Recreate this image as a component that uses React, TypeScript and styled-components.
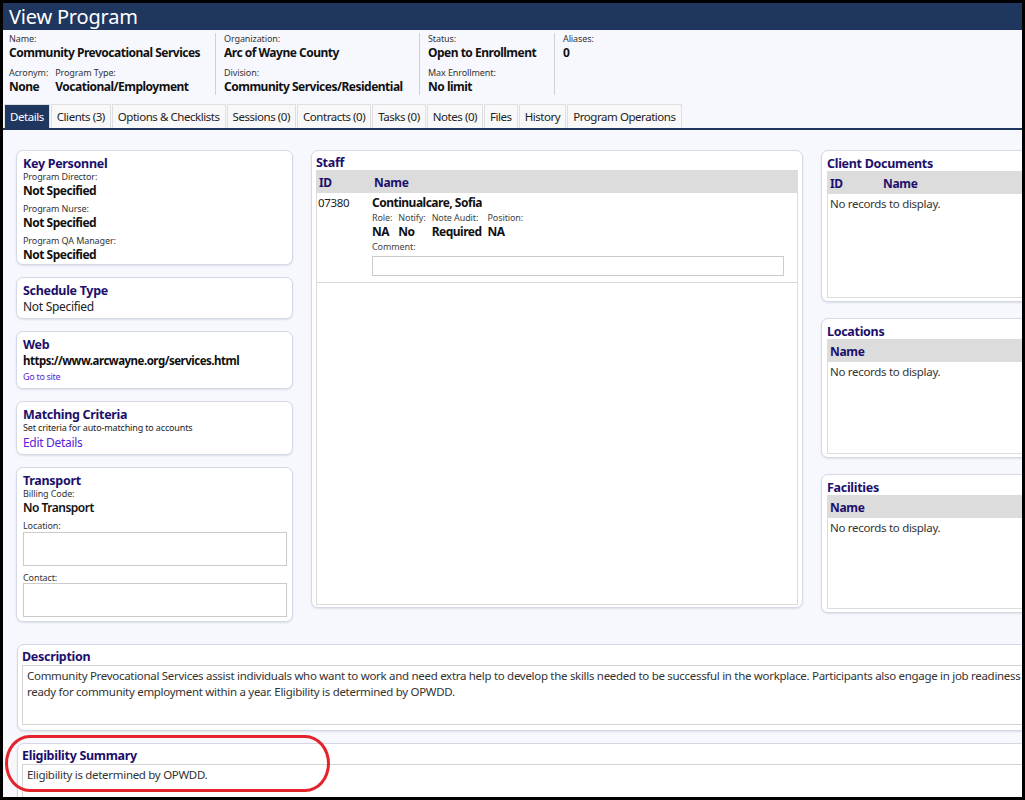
import React from 'react'
import styled, { createGlobalStyle } from 'styled-components'

const navy = '#1f365f'
const ink = '#1c0f6b'

const GlobalStyle = createGlobalStyle`
    html, body {
        margin: 0;
        padding: 0;
        background: #000;
    }
    body {
        font-family: "Noto Sans", "Open Sans", sans-serif;
        color: #111;
        letter-spacing: -0.3px;
    }
`

const Frame = styled.div`
    position: relative;
    width: 1025px;
    height: 800px;
    box-sizing: border-box;
    border: 3px solid #000;
    overflow: hidden;
    background: #f7f8fd;
`

const Page = styled.div`
    width: 1170px;
`

const TitleBar = styled.div`
    height: 27px;
    background: ${navy};
    color: #fff;
    font-size: 20px;
    line-height: 27px;
    padding-left: 6px;
    letter-spacing: -0.2px;
`

const InfoBar = styled.div`
    display: flex;
    height: 62px;
    margin-top: 3px;
`

const InfoCol = styled.div<{ $w?: number; $first?: boolean; $last?: boolean }>`
    box-sizing: border-box;
    width: ${p => (p.$w ? `${p.$w}px` : 'auto')};
    padding: 0 8px 0 ${p => (p.$first ? 6 : 8)}px;
    border-right: ${p => (p.$last ? 'none' : '1px solid #cfd1d8')};
    display: flex;
    flex-direction: column;
`

const InfoPair = styled.div`
    display: flex;
    gap: 7px;
    margin-top: 6px;
`

const Label = styled.div`
    font-size: 9px;
    line-height: 11px;
    color: #333;
    letter-spacing: -0.1px;
    white-space: nowrap;
`

const Value = styled.div<{ $size?: number; $weight?: number }>`
    font-size: ${p => p.$size ?? 12}px;
    font-weight: ${p => p.$weight ?? 700};
    line-height: 17px;
    color: #111;
    letter-spacing: -0.5px;
    white-space: nowrap;
`

const TabRow = styled.div`
    display: flex;
    margin-top: 9px;
    padding-left: 1px;
    border-bottom: 2px solid ${navy};
`

const Tab = styled.div<{ $active?: boolean }>`
    box-sizing: border-box;
    height: 24px;
    line-height: 23px;
    padding: 0 5px;
    border: 1px solid #dedfe3;
    border-bottom: none;
    margin-right: 1px;
    background: ${p => (p.$active ? navy : '#f8f8f8')};
    color: ${p => (p.$active ? '#fff' : '#222')};
    font-size: 11.5px;
    letter-spacing: -0.45px;
    white-space: nowrap;
`

const Main = styled.div`
    display: grid;
    grid-template-columns: 277px 492px 262px;
    column-gap: 18px;
    align-items: start;
    padding: 20px 0 0 13px;
`

const Column = styled.div<{ $gap: number }>`
    display: flex;
    flex-direction: column;
    gap: ${p => p.$gap}px;
`

const Card = styled.section<{ $h?: number; $pad?: string }>`
    box-sizing: border-box;
    background: #fff;
    border: 1px solid #d5d9e6;
    border-radius: 7px;
    box-shadow: 0 1px 2px rgba(40, 50, 90, 0.12);
    padding: ${p => p.$pad ?? '5px 5px 4px 6px'};
    display: flex;
    flex-direction: column;
    ${p => (p.$h ? `height: ${p.$h}px;` : '')}
`

const CardTitle = styled.div`
    font-size: 12.5px;
    font-weight: 700;
    line-height: 15px;
    color: ${ink};
    white-space: nowrap;
`

const Field = styled.div<{ $mt?: number }>`
    margin-top: ${p => p.$mt ?? 0}px;
`

const Plain = styled.div<{ $size?: number }>`
    font-size: ${p => p.$size ?? 12}px;
    line-height: 18px;
    color: #222;
    white-space: nowrap;
`

const Small = styled.div`
    font-size: 9px;
    line-height: 12px;
    color: #222;
    letter-spacing: -0.15px;
    white-space: nowrap;
`

const LinkText = styled.div<{ $size: number; $lh: number }>`
    font-size: ${p => p.$size}px;
    line-height: ${p => p.$lh}px;
    color: #5b22d6;
    white-space: nowrap;
`

const InputBox = styled.div<{ $h: number; $mt?: number }>`
    box-sizing: border-box;
    height: ${p => p.$h}px;
    margin-top: ${p => p.$mt ?? 0}px;
    border: 1px solid #cbcbcb;
    background: #fff;
`

const Table = styled.div<{ $fill?: boolean }>`
    display: flex;
    flex-direction: column;
    border: 1px solid #dcdcdc;
    ${p => (p.$fill ? 'flex: 1;' : '')}
`

const HeadRow = styled.div`
    display: flex;
    height: 22px;
    align-items: center;
    background: #dcdcdc;
`

const HeadCell = styled.div<{ $w?: number }>`
    ${p => (p.$w ? `width: ${p.$w}px;` : 'flex: 1;')}
    box-sizing: border-box;
    padding-left: 2px;
    font-size: 12px;
    font-weight: 700;
    color: ${ink};
`

const Empty = styled.div`
    padding: 1px 2px;
    font-size: 11.5px;
    line-height: 18px;
    color: #333;
`

const StaffRow = styled.div`
    display: flex;
    padding: 1px 13px 6px 0;
    border-bottom: 1px solid #d6d6d6;
`

const IdCell = styled.div`
    box-sizing: border-box;
    width: 55px;
    padding-left: 1px;
    font-size: 11.5px;
    line-height: 18px;
    color: #222;
`

const StaffBody = styled.div`
    flex: 1;
    display: flex;
    flex-direction: column;
`

const SubFields = styled.div`
    display: flex;
    gap: 6px;
    margin-top: 1px;
`

const SubField = styled.div`
    display: flex;
    flex-direction: column;
`

const SubLabel = styled.div`
    font-size: 9px;
    line-height: 11px;
    color: #444;
    letter-spacing: -0.1px;
    white-space: nowrap;
`

const Bottom = styled.div`
    display: flex;
    flex-direction: column;
    gap: 12px;
    padding: 22px 0 0 14px;
`

const TextArea = styled.div<{ $h: number }>`
    box-sizing: border-box;
    height: ${p => p.$h}px;
    margin-top: 1px;
    padding: 2px 4px;
    border: 1px solid #d3d3d3;
    border-right: none;
    font-size: 11.5px;
    line-height: 16px;
    color: #333;
    white-space: nowrap;
`

const Annotation = styled.div`
    position: absolute;
    left: 2px;
    top: 732px;
    width: 325px;
    height: 57px;
    box-sizing: border-box;
    border: 3px solid #e3232b;
    border-radius: 26px / 30px;
    pointer-events: none;
`

const tabs = [
    'Details',
    'Clients (3)',
    'Options & Checklists',
    'Sessions (0)',
    'Contracts (0)',
    'Tasks (0)',
    'Notes (0)',
    'Files',
    'History',
    'Program Operations',
]

const staffFields = [
    { label: 'Role:', value: 'NA' },
    { label: 'Notify:', value: 'No' },
    { label: 'Note Audit:', value: 'Required' },
    { label: 'Position:', value: 'NA' },
]

function RecordList({ title, cols, h }: { title: string; cols: { name: string; w?: number }[]; h: number }) {
    return (
        <Card $h={h} $pad="5px 0 3px 5px">
            <CardTitle>{title}</CardTitle>
            <Table $fill>
                <HeadRow>
                    {cols.map(c => (
                        <HeadCell key={c.name} $w={c.w}>{c.name}</HeadCell>
                    ))}
                </HeadRow>
                <Empty>No records to display.</Empty>
            </Table>
        </Card>
    )
}

export default function App() {
    return (
        <>
            <GlobalStyle />
            <Frame>
                <Page>
                    <TitleBar>View Program</TitleBar>
                    <InfoBar>
                        <InfoCol $w={213} $first>
                            <Label>Name:</Label>
                            <Value>Community Prevocational Services</Value>
                            <InfoPair>
                                <div>
                                    <Label>Acronym:</Label>
                                    <Value>None</Value>
                                </div>
                                <div>
                                    <Label>Program Type:</Label>
                                    <Value>Vocational/Employment</Value>
                                </div>
                            </InfoPair>
                        </InfoCol>
                        <InfoCol $w={204}>
                            <Label>Organization:</Label>
                            <Value>Arc of Wayne County</Value>
                            <Field $mt={6}>
                                <Label>Division:</Label>
                                <Value>Community Services/Residential</Value>
                            </Field>
                        </InfoCol>
                        <InfoCol $w={135}>
                            <Label>Status:</Label>
                            <Value>Open to Enrollment</Value>
                            <Field $mt={6}>
                                <Label>Max Enrollment:</Label>
                                <Value>No limit</Value>
                            </Field>
                        </InfoCol>
                        <InfoCol $last>
                            <Label>Aliases:</Label>
                            <Value>0</Value>
                        </InfoCol>
                    </InfoBar>

                    <TabRow>
                        {tabs.map((t, i) => (
                            <Tab key={t} $active={i === 0}>{t}</Tab>
                        ))}
                    </TabRow>

                    <Main>
                        <Column $gap={12}>
                            <Card $h={115}>
                                <CardTitle>Key Personnel</CardTitle>
                                <Label>Program Director:</Label>
                                <Value>Not Specified</Value>
                                <Field $mt={4}>
                                    <Label>Program Nurse:</Label>
                                    <Value>Not Specified</Value>
                                </Field>
                                <Field $mt={4}>
                                    <Label>Program QA Manager:</Label>
                                    <Value>Not Specified</Value>
                                </Field>
                            </Card>
                            <Card $h={42}>
                                <CardTitle>Schedule Type</CardTitle>
                                <Plain>Not Specified</Plain>
                            </Card>
                            <Card $h={58}>
                                <CardTitle>Web</CardTitle>
                                <Value $size={11.5}>https://www.arcwayne.org/services.html</Value>
                                <LinkText $size={9} $lh={16}>Go to site</LinkText>
                            </Card>
                            <Card $h={54}>
                                <CardTitle>Matching Criteria</CardTitle>
                                <Small>Set criteria for auto-matching to accounts</Small>
                                <LinkText $size={12} $lh={18}>Edit Details</LinkText>
                            </Card>
                            <Card $h={155}>
                                <CardTitle>Transport</CardTitle>
                                <Label>Billing Code:</Label>
                                <Value $weight={600}>No Transport</Value>
                                <Field $mt={4}>
                                    <Label>Location:</Label>
                                    <InputBox $h={34} $mt={1} />
                                </Field>
                                <Field $mt={6}>
                                    <Label>Contact:</Label>
                                    <InputBox $h={34} />
                                </Field>
                            </Card>
                        </Column>

                        <Card $h={458} $pad="4px 4px 2px 4px">
                            <CardTitle>Staff</CardTitle>
                            <Table $fill>
                                <HeadRow>
                                    <HeadCell $w={55}>ID</HeadCell>
                                    <HeadCell>Name</HeadCell>
                                </HeadRow>
                                <StaffRow>
                                    <IdCell>07380</IdCell>
                                    <StaffBody>
                                        <Value>Continualcare, Sofia</Value>
                                        <SubFields>
                                            {staffFields.map(f => (
                                                <SubField key={f.label}>
                                                    <SubLabel>{f.label}</SubLabel>
                                                    <Value>{f.value}</Value>
                                                </SubField>
                                            ))}
                                        </SubFields>
                                        <Field $mt={1}>
                                            <SubLabel>Comment:</SubLabel>
                                            <InputBox $h={20} $mt={4} />
                                        </Field>
                                    </StaffBody>
                                </StaffRow>
                            </Table>
                        </Card>

                        <Column $gap={16}>
                            <RecordList title="Client Documents" h={152} cols={[{ name: 'ID', w: 53 }, { name: 'Name' }]} />
                            <RecordList title="Locations" h={140} cols={[{ name: 'Name' }]} />
                            <RecordList title="Facilities" h={139} cols={[{ name: 'Name' }]} />
                        </Column>
                    </Main>

                    <Bottom>
                        <Card $pad="4px 0 5px 4px">
                            <CardTitle>Description</CardTitle>
                            <TextArea $h={60}>
                                Community Prevocational Services assist individuals who want to work and need extra help to develop the skills needed to be successful in the workplace. Participants also engage in job readiness training to become
                                <br />
                                ready for community employment within a year. Eligibility is determined by OPWDD.
                            </TextArea>
                        </Card>
                        <Card $pad="4px 0 5px 4px">
                            <CardTitle>Eligibility Summary</CardTitle>
                            <TextArea $h={60}>Eligibility is determined by OPWDD.</TextArea>
                        </Card>
                    </Bottom>
                </Page>
                <Annotation />
            </Frame>
        </>
    )
}
